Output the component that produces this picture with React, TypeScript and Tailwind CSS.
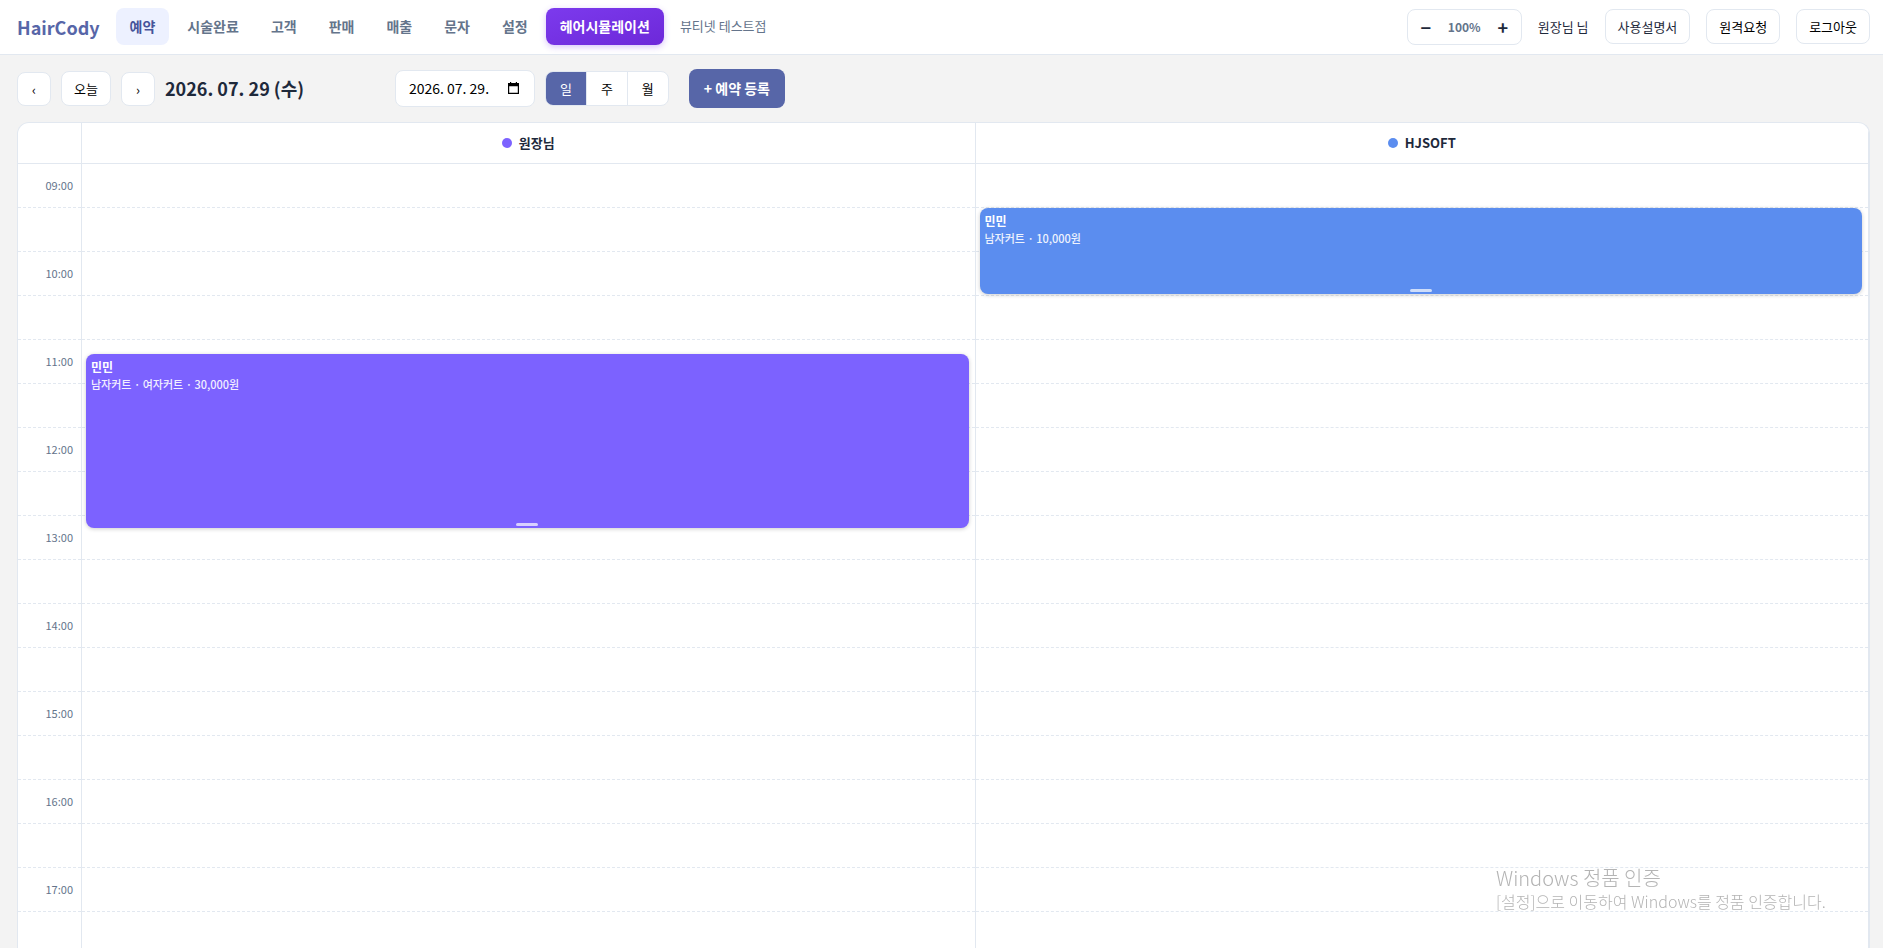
import { useState } from 'react';

const navItems = ['예약', '시술완료', '고객', '판매', '매출', '문자', '설정'];
const views = ['일', '주', '월'];
const hours = [9, 10, 11, 12, 13, 14, 15, 16, 17];

const ROW_HEIGHT = 44; // one row = 30 minutes
const OPEN_MINUTE = 9 * 60;

type Booking = { start: number; duration: number; customer: string; detail: string };
type Staff = { name: string; dot: string; card: string; bookings: Booking[] };

const staff: Staff[] = [
  {
    name: '원장님',
    dot: 'bg-[#7c62ff]',
    card: 'bg-[#7c62ff]',
    bookings: [{ start: 11 * 60 + 10, duration: 120, customer: '민민', detail: '남자커트 · 여자커트 · 30,000원' }],
  },
  {
    name: 'HJSOFT',
    dot: 'bg-[#5b8def]',
    card: 'bg-[#5b8def]',
    bookings: [{ start: 9 * 60 + 30, duration: 60, customer: '민민', detail: '남자커트 · 10,000원' }],
  },
];

const toPx = (minutes: number) => Math.floor((minutes / 30) * ROW_HEIGHT);

function Header() {
  const [zoom, setZoom] = useState(100);

  return (
    <header className="flex h-[55px] shrink-0 items-center border-b border-[#e2e8f0] bg-white pr-[13px] pb-px pl-[17px]">
      <a href="#" className="mr-4 text-lg font-bold text-[#5766a8]">HairCody</a>
      <nav className="flex gap-1">
        {navItems.map((item, i) => (
          <a key={item} href="#" className={`flex h-[37px] items-center rounded-lg px-[14px] pb-0.5 text-sm font-bold ${i === 0 ? 'bg-[#edf1ff] text-[#46549a]' : 'text-[#64748b]'}`}>{item}</a>
        ))}
        <a href="#" className="flex h-[37px] items-center rounded-lg bg-gradient-to-br from-[#7c3aed] to-[#6d28d9] px-[14px] pb-0.5 text-sm font-bold text-white shadow-[0_2px_6px_rgba(124,58,237,0.3)]">헤어시뮬레이션</a>
      </nav>
      <span className="ml-4 pb-0.5 text-[13px] text-[#64748b]">뷰티넷 테스트점</span>

      <div className="ml-auto flex items-center gap-4 text-[13px] text-[#1e293b]">
        <div className="flex h-9 items-center rounded-lg border border-[#e2e8f0] p-1">
          <button type="button" aria-label="축소" onClick={() => setZoom(zoom - 10)} className="h-6 w-7 text-lg leading-6 font-bold">−</button>
          <span className="w-[49px] text-center text-xs font-bold text-[#64748b]">{zoom}%</span>
          <button type="button" aria-label="확대" onClick={() => setZoom(zoom + 10)} className="h-6 w-7 text-lg leading-6 font-bold">+</button>
        </div>
        <span>원장님 님</span>
        <a href="#" className="flex h-[35px] items-center rounded-lg border border-[#e2e8f0] px-3">사용설명서</a>
        <button type="button" className="h-[35px] rounded-lg border border-[#e2e8f0] px-3 text-black">원격요청</button>
        <button type="button" className="h-[35px] rounded-lg border border-[#e2e8f0] px-3 text-black">로그아웃</button>
      </div>
    </header>
  );
}

function Toolbar() {
  const [view, setView] = useState('일');

  return (
    <div className="flex shrink-0 items-center gap-[10px] py-[14px] text-[13px] text-black">
      <button type="button" aria-label="이전" className="size-[34px] rounded-lg border border-[#e2e8f0] bg-white pt-0.5">‹</button>
      <button type="button" className="h-[35px] rounded-lg border border-[#e2e8f0] bg-white px-3">오늘</button>
      <button type="button" aria-label="다음" className="size-[34px] rounded-lg border border-[#e2e8f0] bg-white pt-0.5">›</button>
      <h1 className="min-w-[220px] pb-0.5 text-lg font-bold text-[#1e293b]">2026. 07. 29 (수)</h1>

      <label className="flex h-[37px] w-[140px] items-center justify-between rounded-lg border border-[#e2e8f0] bg-white pr-[15px] pb-0.5 pl-[13px]">
        <input type="text" aria-label="날짜" defaultValue="2026. 07. 29." className="w-[90px] text-sm outline-none" />
        <svg viewBox="0 0 11 12" className="h-3 w-[11px]" aria-hidden="true">
          <path d="M0 1h2V0h1.2v1h4.6V0H9v1h2v11H0zM1.2 4.2v6.6h8.6V4.2z" fill="#000" fillRule="evenodd" />
        </svg>
      </label>

      <div className="flex h-[35px] overflow-hidden rounded-lg border border-[#e2e8f0] bg-white">
        {views.map((v) => (
          <button key={v} type="button" onClick={() => setView(v)} className={`border-r border-[#e2e8f0] px-[14px] last:border-r-0 ${v === view ? 'bg-[#5766a8] text-white' : ''}`}>{v}</button>
        ))}
      </div>
      <button type="button" className="ml-[10px] h-[39px] rounded-lg bg-[#5766a8] px-[15px] pb-0.5 text-sm font-bold text-white">+ 예약 등록</button>
    </div>
  );
}

function BookingCard({ booking, color }: { booking: Booking; color: string }) {
  return (
    <div
      className={`absolute right-1.5 left-1 overflow-hidden rounded-lg px-[5px] py-1 text-white shadow-[0_1px_4px_rgba(0,0,0,0.2)] ${color}`}
      style={{ top: toPx(booking.start - OPEN_MINUTE), height: toPx(booking.duration) - 2 }}
    >
      <div className="text-xs leading-[18px] font-bold">{booking.customer}</div>
      <div className="text-[11px] leading-4 font-medium opacity-90">{booking.detail}</div>
      <div className="absolute bottom-[2px] left-1/2 h-[3px] w-[22px] -translate-x-1/2 rounded-sm bg-white/70" />
    </div>
  );
}

function Schedule() {
  return (
    <section className="min-h-0 flex-1 overflow-hidden rounded-t-xl border border-b-0 border-[#e2e8f0] bg-white">
      <div className="grid grid-cols-[64px_1fr_1fr]">
        <div className="h-[41px] border-r border-b border-[#e2e8f0]" />
        {staff.map((s) => (
          <div key={s.name} className="flex h-[41px] items-center justify-center gap-[7px] border-r border-b border-[#e2e8f0] text-[13px] font-bold text-[#1e293b]">
            <span className={`size-[10px] rounded-full ${s.dot}`} />
            {s.name}
          </div>
        ))}

        {/* Time axis */}
        <div className="border-r border-[#e2e8f0]">
          {hours.map((h) => (
            <div key={h}>
              <div className="flex h-11 items-center justify-end border-b border-dashed border-[#e2e8f0] pr-2 text-[11px] text-[#64748b]">{String(h).padStart(2, '0')}:00</div>
              <div className="h-11 border-b border-dashed border-[#e2e8f0]" />
            </div>
          ))}
        </div>

        {/* Staff columns */}
        {staff.map((s) => (
          <div key={s.name} className="relative border-r border-[#e2e8f0]">
            {hours.map((h) => (
              <div key={h}>
                <div className="h-11 border-b border-dashed border-[#e2e8f0]" />
                <div className="h-11 border-b border-dashed border-[#e2e8f0]" />
              </div>
            ))}
            {s.bookings.map((b) => (
              <BookingCard key={b.start} booking={b} color={s.card} />
            ))}
          </div>
        ))}
      </div>
    </section>
  );
}

export default function App() {
  return (
    <div className="flex h-screen flex-col overflow-hidden bg-[#f3f3f3] font-['Noto_Sans_CJK_KR',sans-serif]">
      <Header />
      <main className="flex min-h-0 flex-1 flex-col pr-[13px] pl-[17px]">
        <Toolbar />
        <Schedule />
      </main>

      {/* Windows activation notice */}
      <div className="pointer-events-none fixed right-[51px] bottom-9 w-[336px] font-light whitespace-nowrap text-[#b4b4b4]">
        <div className="text-xl leading-6">Windows 정품 인증</div>
        <div className="text-base leading-[22px]">[설정]으로 이동하여 Windows를 정품 인증합니다.</div>
      </div>
    </div>
  );
}
